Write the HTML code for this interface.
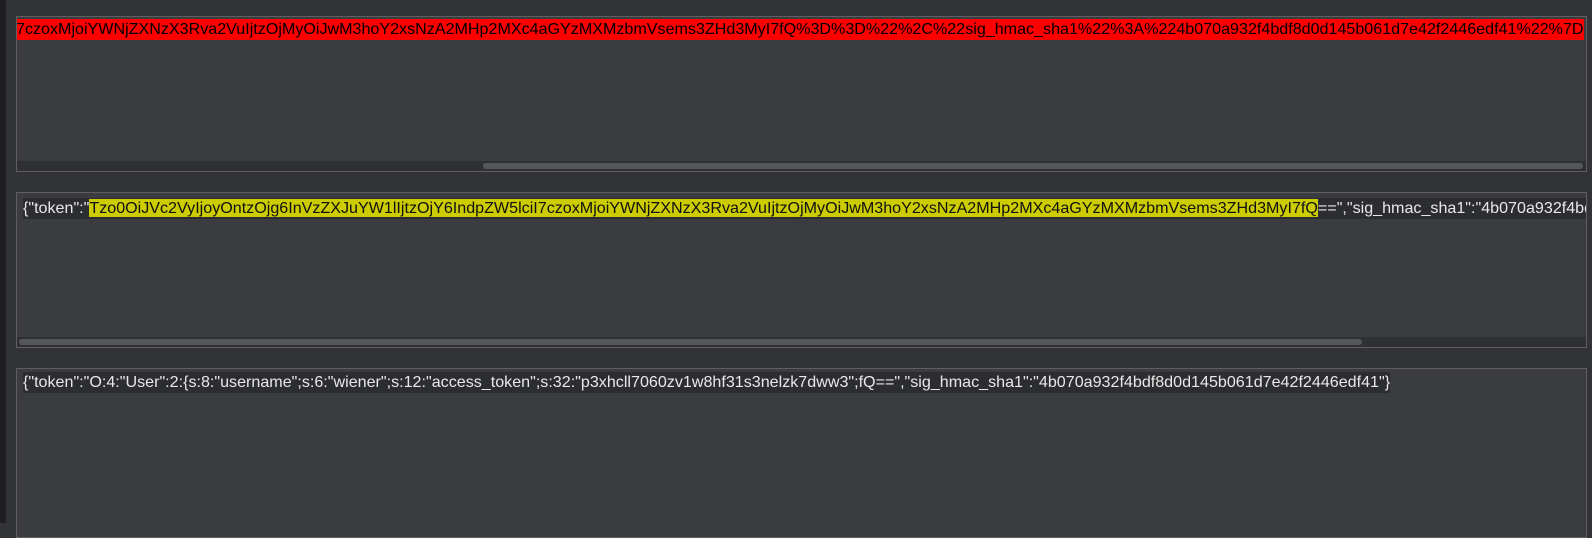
<!DOCTYPE html><html><head><style>
body{margin:0;width:1592px;height:523px;background:#323336;position:relative;overflow:hidden;font-family:"Liberation Sans",sans-serif;font-size:16.1px}
.l{position:absolute;left:0;top:0;width:6px;height:523px;background:#1f1f21}
.p{position:absolute;left:16px;width:1571px;border:1px solid #5f5f62;background:#3b3c3f;overflow:hidden;box-sizing:border-box}
.t{position:absolute;white-space:nowrap;line-height:21px;color:#e8e8e8;background:#2c2d30}
.sb{position:absolute;left:0;right:0;height:10px;background:#2f3033}
.th{position:absolute;top:2px;height:6px;border-radius:3px;background:#56575a}
.r{background:#f00;color:#000}.y{background:#cccc00;color:#111}
</style></head><body><div class="l"></div>
<div class="p" style="top:16px;height:156px"><div class="t r" style="left:-1px;top:2px">7czoxMjoiYWNjZXNzX3Rva2VuIjtzOjMyOiJwM3hoY2xsNzA2MHp2MXc4aGYzMXMzbmVsems3ZHd3MyI7fQ%3D%3D%22%2C%22sig_hmac_sha1%22%3A%224b070a932f4bdf8d0d145b061d7e42f2446edf41%22%7D</div><div class="sb" style="top:144px"><div class="th" style="left:466px;width:1100px"></div></div></div>
<div class="p" style="top:192px;height:156px"><div class="t" style="left:6px;top:5px">{"token":"<span class="y">Tzo0OiJVc2VyIjoyOntzOjg6InVzZXJuYW1lIjtzOjY6IndpZW5lciI7czoxMjoiYWNjZXNzX3Rva2VuIjtzOjMyOiJwM3hoY2xsNzA2MHp2MXc4aGYzMXMzbmVsems3ZHd3MyI7fQ</span>==","sig_hmac_sha1":"4b070a932f4bdf8d0d145b061d7e42f2446edf41"}</div><div class="sb" style="top:144px"><div class="th" style="left:2px;width:1343px"></div></div></div>
<div class="p" style="top:368px;height:170px"><div class="t" style="left:6px;top:3px">{"token":"O:4:"User":2:{s:8:"username";s:6:"wiener";s:12:"access_token";s:32:"p3xhcll7060zv1w8hf31s3nelzk7dww3";fQ==","sig_hmac_sha1":"4b070a932f4bdf8d0d145b061d7e42f2446edf41"}</div></div>
</body></html>
